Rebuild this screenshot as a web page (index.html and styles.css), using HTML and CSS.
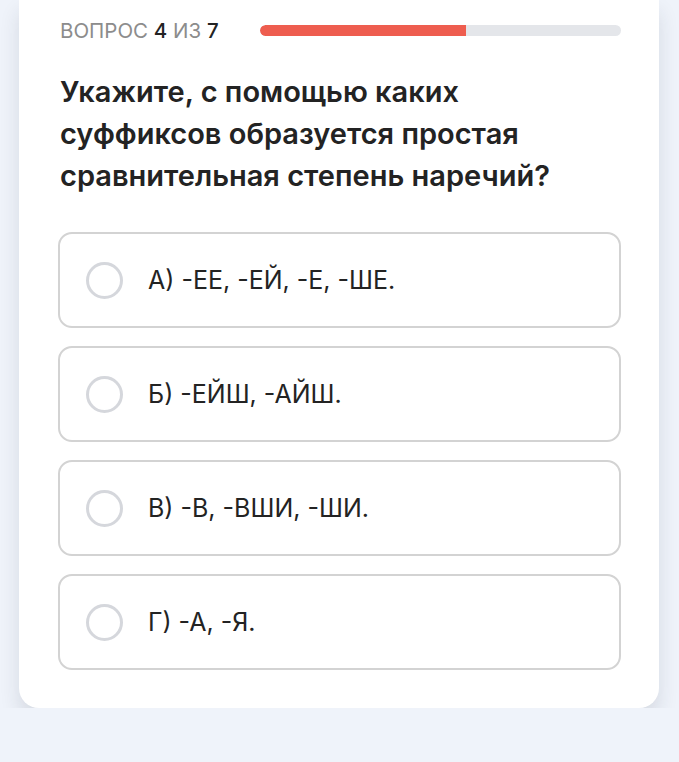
FILE: index.html
```html
<!DOCTYPE html>
<html lang="ru">

<head>
    <title>Вопрос 4 из 7</title>
    <meta charset="utf-8">
    <meta name="viewport" content="width=device-width, initial-scale=1.0">
    <link rel="stylesheet" href="styles.css">
</head>

<body>
    <div class="quiz-card">
        <div class="quiz-head">
            <div class="quiz-counter">
                ВОПРОС <b>4</b> ИЗ <b>7</b>
            </div>
            <div class="progress">
                <div class="progress-fill" style="width: 57%"></div>
            </div>
        </div>

        <h2 class="question">
            Укажите, с помощью каких суффиксов образуется простая сравнительная степень наречий?
        </h2>

        <div class="answers">
            <label class="answer">
                <span class="radio"></span>
                <span class="answer-text">А) -ЕЕ, -ЕЙ, -Е, -ШЕ.</span>
            </label>
            <label class="answer">
                <span class="radio"></span>
                <span class="answer-text">Б) -ЕЙШ, -АЙШ.</span>
            </label>
            <label class="answer">
                <span class="radio"></span>
                <span class="answer-text">В) -В, -ВШИ, -ШИ.</span>
            </label>
            <label class="answer">
                <span class="radio"></span>
                <span class="answer-text">Г) -А, -Я.</span>
            </label>
        </div>
    </div>
</body>

</html>
```

FILE: styles.css
```css
body {
    padding: 0;
    margin: 0;
    overflow: hidden;
    background: #EFF3FA;
    font-family: 'Inter', 'Roboto', sans-serif;
    color: #232323;
}

.quiz-card {
    width: 640px;
    margin-left: 19px;
    background: #FFFFFF;
    border-radius: 0 0 20px 20px;
    box-shadow: 0 12px 20px rgba(30, 40, 60, 0.12);
    padding: 18px 38px 38px 39px;
    box-sizing: border-box;
}

.quiz-head {
    display: flex;
    align-items: center;
    height: 24px;
    padding-left: 2px;
}

.quiz-counter {
    font-size: 20.5px;
    color: #8C8C8C;
    white-space: nowrap;
}

.quiz-counter b {
    font-weight: 500;
    color: #232323;
}

.progress {
    margin-left: auto;
    width: 361px;
    height: 11px;
    border-radius: 6px;
    background: #E4E6EA;
    overflow: hidden;
}

.progress-fill {
    height: 100%;
    background: #EE5D4F;
    border-radius: 6px 0 0 6px;
}

.question {
    font-size: 29px;
    line-height: 42px;
    font-weight: 600;
    margin: 29px 0 35px;
    padding: 0 30px 0 2px;
    color: #232323;
}

.answers {
    display: flex;
    flex-direction: column;
    gap: 18px;
}

.answer {
    display: flex;
    align-items: center;
    gap: 25px;
    height: 96px;
    box-sizing: border-box;
    border: 2px solid #D3D3D3;
    border-radius: 14px;
    padding-left: 26px;
    cursor: pointer;
}

.radio {
    width: 37px;
    height: 37px;
    box-sizing: border-box;
    border: 3px solid #D5D7DC;
    border-radius: 50%;
    flex-shrink: 0;
}

.answer-text {
    font-size: 25px;
    color: #232323;
}
```
